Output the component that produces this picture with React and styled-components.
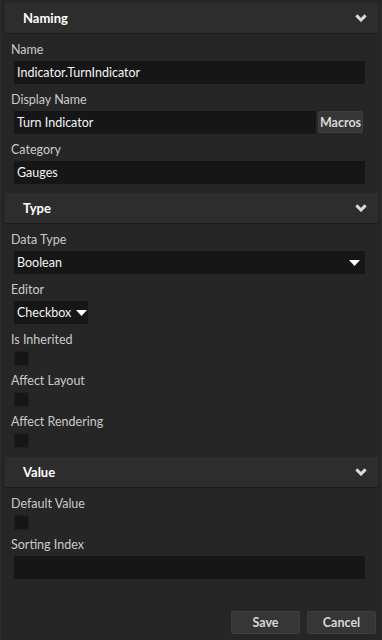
import React from "react";
import styled, { createGlobalStyle } from "styled-components";

const Global = createGlobalStyle`
	html, body {
		margin: 0;
		padding: 0;
		background: #262626;
	}
	body {
		font-family: "Lato", "Open Sans", sans-serif;
		-webkit-font-smoothing: antialiased;
	}
`;

const Panel = styled.div`
	width: 382px;
	height: 640px;
	box-sizing: border-box;
	background: #262626;
	border-left: 1px solid #2c2c2c;
	border-right: 1px solid #2c2c2c;
	padding: 3px 3px 0 4px;
	display: flex;
	flex-direction: column;
`;

const Section = styled.section`
	display: flex;
	flex-direction: column;
	padding-bottom: 9px;
`;

const Header = styled.div`
	height: 30px;
	box-sizing: content-box;
	background: #2d2d2d;
	border-bottom: 1px solid #1c1c1c;
	display: flex;
	align-items: center;
	justify-content: space-between;
	padding: 0 11px 0 18px;
	color: #ffffff;
	font-weight: 700;
	font-size: 13px;
`;

const Body = styled.div`
	display: flex;
	flex-direction: column;
	padding-left: 9px;
`;

const Label = styled.div`
	height: 27px;
	box-sizing: border-box;
	padding-top: 8px;
	font-size: 12.5px;
	line-height: 16px;
	color: #cacaca;
	margin-left: -3px;
	margin-top: ${(p) => (p.$tight ? "-1px" : "0")};
`;

const Field = styled.div`
	height: 23px;
	width: ${(p) => p.$width || "351px"};
	box-sizing: border-box;
	background: #161616;
	color: #f4f4f4;
	font-size: 12.5px;
	display: flex;
	align-items: center;
	justify-content: ${(p) => (p.$compact ? "flex-start" : "space-between")};
	gap: 5px;
	padding: 0 5px 0 3px;
	white-space: nowrap;

	svg {
		flex-shrink: 0;
	}
`;

const Row = styled.div`
	display: flex;
	gap: 2px;
	align-items: flex-start;
`;

const Button = styled.div`
	height: ${(p) => (p.$h ? p.$h : "22px")};
	width: ${(p) => p.$w};
	box-sizing: border-box;
	background: #363636;
	border: 1px solid #3e3e3e;
	border-radius: 2px;
	color: #d8d8d8;
	font-size: 12.5px;
	font-weight: 700;
	display: flex;
	align-items: center;
	justify-content: center;
`;

const Check = styled.div`
	width: 15px;
	height: 15px;
	background: #161616;
	border: 1px solid #1f1f1f;
	box-sizing: border-box;
`;

const Footer = styled.div`
	margin-top: auto;
	display: flex;
	justify-content: flex-end;
	gap: 7px;
	padding: 0 2px 6px 0;
`;

const Chevron = () => (
	<svg width="12" height="8" viewBox="0 0 12 8">
		<path d="M1.4 1.4 L6 6 L10.6 1.4" fill="none" stroke="#dadada" strokeWidth="3" />
	</svg>
);

const Caret = () => (
	<svg width="11" height="6" viewBox="0 0 11 6">
		<path d="M0 0 H11 L5.5 6 Z" fill="#ffffff" />
	</svg>
);

const App = () => {
	return (
		<>
			<Global />
			<Panel>
				<Section>
					<Header>
						<span>Naming</span>
						<Chevron />
					</Header>
					<Body>
						<Label>Name</Label>
						<Field>Indicator.TurnIndicator</Field>
						<Label>Display Name</Label>
						<Row>
							<Field $width="302px">Turn Indicator</Field>
							<Button $w="45px">Macros</Button>
						</Row>
						<Label>Category</Label>
						<Field>Gauges</Field>
					</Body>
				</Section>
				<Section>
					<Header>
						<span>Type</span>
						<Chevron />
					</Header>
					<Body>
						<Label>Data Type</Label>
						<Field>
							Boolean
							<Caret />
						</Field>
						<Label>Editor</Label>
						<Field $width="74px" $compact>
							Checkbox
							<Caret />
						</Field>
						<Label>Is Inherited</Label>
						<Check />
						<Label $tight>Affect Layout</Label>
						<Check />
						<Label $tight>Affect Rendering</Label>
						<Check />
					</Body>
				</Section>
				<Section>
					<Header>
						<span>Value</span>
						<Chevron />
					</Header>
					<Body>
						<Label>Default Value</Label>
						<Check />
						<Label $tight>Sorting Index</Label>
						<Field />
					</Body>
				</Section>
				<Footer>
					<Button $w="69px" $h="23px">Save</Button>
					<Button $w="69px" $h="23px">Cancel</Button>
				</Footer>
			</Panel>
		</>
	);
};

export default App;
